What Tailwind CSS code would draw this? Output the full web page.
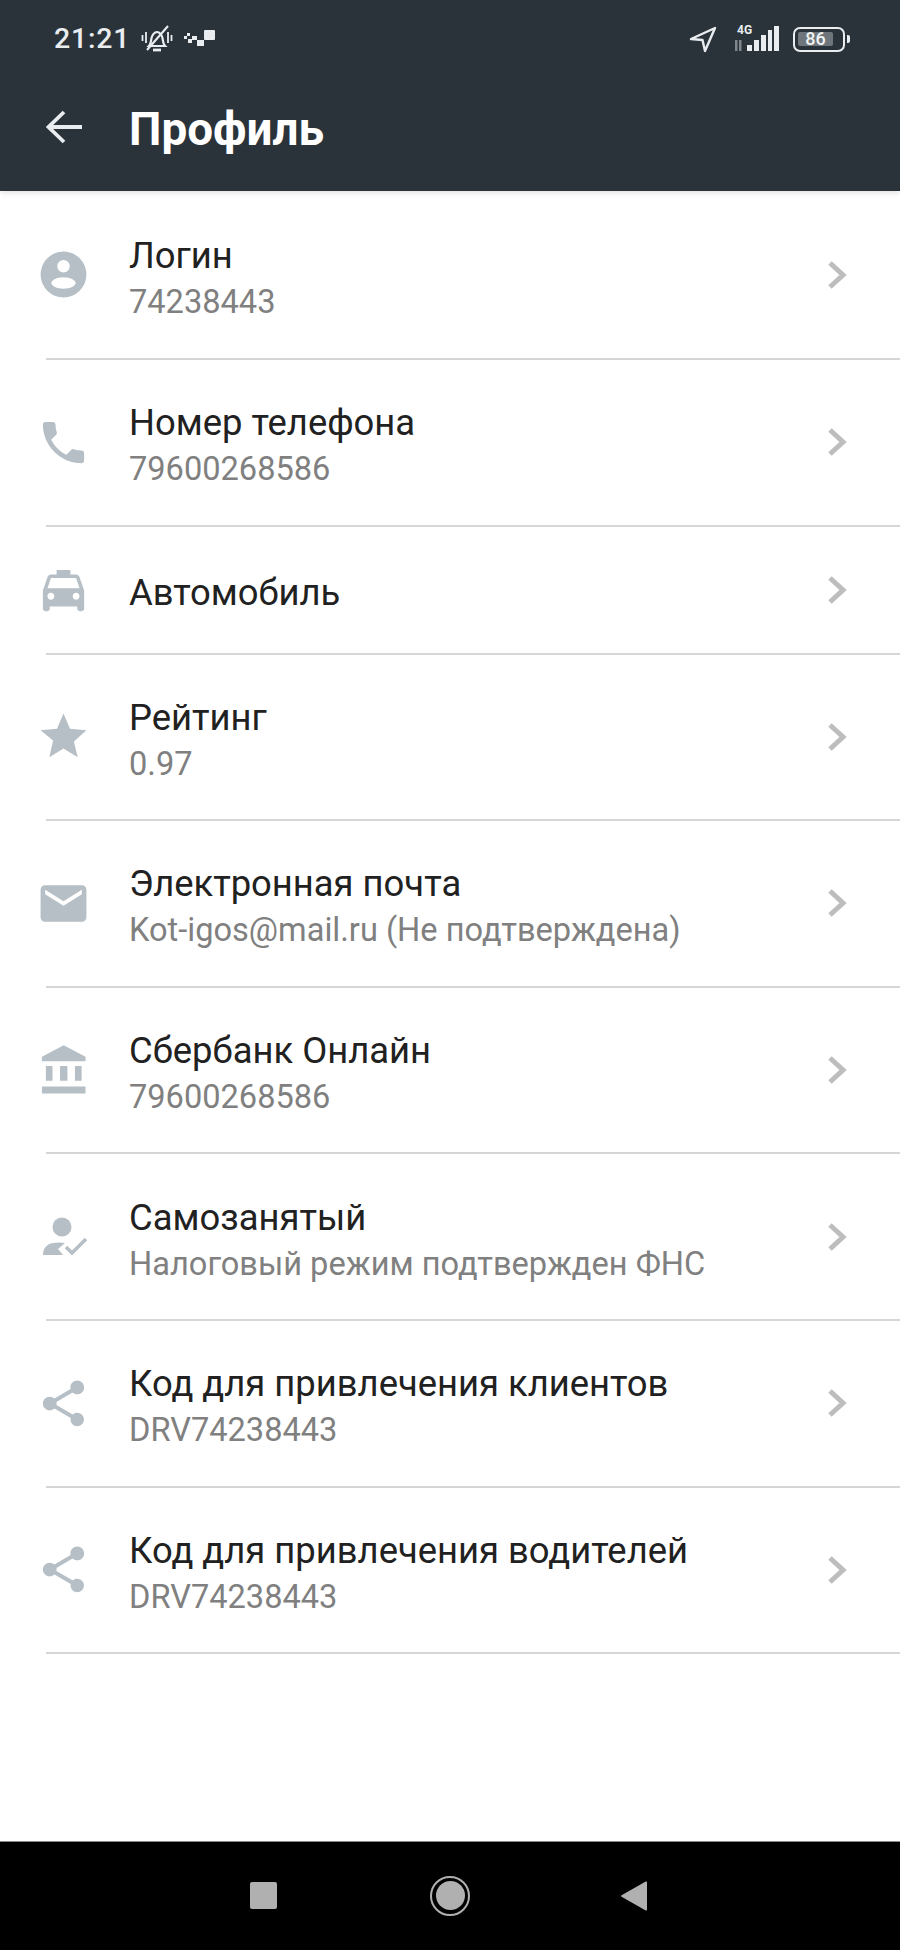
<!DOCTYPE html>
<html lang="ru">
<head>
  <meta charset="UTF-8" />
  <meta name="viewport" content="width=device-width, initial-scale=1.0"/>
  <title>Профиль</title>
  <script src="https://cdn.jsdelivr.net/npm/@tailwindcss/browser@4"></script>
</head>
<body class="bg-white font-['Roboto',sans-serif]">
  <div class="w-[900px] h-[1950px] flex flex-col overflow-hidden">
    <!-- шапка -->
    <header class="h-[191px] shrink-0 bg-[#2b333a] text-white shadow-[0_2px_6px_rgba(0,0,0,0.12)] z-10">
      <div class="h-[78px] flex items-center pl-[54px] pr-[50px]">
        <span class="w-[75px] text-[28.500px] font-medium text-[#e9edf0] tracking-[0.8px]">21:21</span>
        <svg class="ml-[12px] w-[32px] h-[32px]" viewBox="0 0 32 32" fill="none" stroke="#e9edf0" stroke-width="2.200">
          <path d="M8 23c2-2 2-5 2.500-8 .6-3 3-6 5.500-6s5 3 5.500 6c.5 3 .5 6 2.500 8z"/>
          <path d="M12 27h8" stroke-width="2.800"/>
          <path d="M6 27L27 3" stroke-width="2"/>
          <path d="M1.500 12v6M5 9v11M27 9v11M30.500 12v6" stroke-width="1.800"/>
        </svg>
        <svg class="ml-[11px] w-[31px] h-[20px]" viewBox="0 0 31 20" fill="#e9edf0">
          <rect x="0" y="7" width="3" height="3"/>
          <rect x="3" y="4" width="3" height="3"/>
          <rect x="4" y="10" width="4" height="4"/>
          <rect x="8" y="7" width="5" height="4"/>
          <rect x="13" y="11" width="7" height="6"/>
          <rect x="20" y="1" width="11" height="10" rx="1"/>
        </svg>
        <div class="flex-1"></div>
        <svg class="w-[28px] h-[28px]" viewBox="0 0 28 28" fill="none" stroke="#e9edf0" stroke-width="2.400" stroke-linejoin="round">
          <path d="M2 14L26 3 16 26 13.500 15z"/>
        </svg>
        <div class="ml-[16px] relative w-[47px] h-[28px]">
          <span class="absolute left-[4px] top-[-4px] text-[12px] font-bold text-[#e9edf0]">4G</span>
          <svg class="absolute inset-0 w-[47px] h-[28px]" viewBox="0 0 47 28" fill="#e9edf0">
            <path d="M2 15h2.500v11H2zM6 15h2.500v11H6z" opacity="0.45"/>
            <rect x="14" y="20" width="5" height="6"/>
            <rect x="21" y="15" width="5" height="11"/>
            <rect x="28" y="10" width="5" height="16"/>
            <rect x="35" y="5" width="4" height="21"/>
            <rect x="41" y="1" width="5" height="25"/>
          </svg>
        </div>
        <div class="ml-[13px] w-[52px] h-[25px] rounded-[7px] border-[2.500px] border-[#e9edf0] flex items-center px-[3px]">
          <div class="w-[35px] h-[14px] rounded-[2px] bg-[#6f767b] flex items-center justify-center text-[18px] font-medium text-[#f1f3f4] leading-none">86</div>
        </div>
        <div class="ml-[2px] w-[3px] h-[8px] rounded-r-[2px] bg-[#e9edf0]"></div>
      </div>
      <div class="h-[95px] flex items-center pl-[44px]">
        <svg class="w-[40px] h-[40px] mt-[5px]" viewBox="0 0 40 40" fill="none" stroke="#e9edf0" stroke-width="3.800">
          <path d="M38 19H5M20 4L4.500 19 20 34"/>
        </svg>
        <h1 class="ml-[45px] mt-[8px] text-[45.800px] font-bold leading-none">Профиль</h1>
      </div>
    </header>

    <!-- список -->
    <main class="flex-1 flex flex-col">
      <a class="h-[167px] flex items-center">
        <svg class="w-[55px] h-[55px] ml-[36px] shrink-0" viewBox="0 0 24 24" fill="#b5bfc5">
          <path fill-rule="evenodd" d="M12 2a10 10 0 1 0 0 20 10 10 0 0 0 0-20zM12 5.700a2.700 2.700 0 1 1 0 5.400 2.700 2.700 0 0 1 0-5.400zM12 13.200c2.900 0 5.300 1.300 5.300 2.500s-2.400 2.500-5.300 2.500-5.300-1.300-5.300-2.500 2.400-2.500 5.300-2.500z"/>
        </svg>
        <div class="ml-[38px] flex-1 pt-[8px]">
          <div class="text-[36.400px] leading-[46px] text-[#212121]">Логин</div>
          <div class="text-[32.600px] leading-[46px] text-[#808080]">74238443</div>
        </div>
        <svg class="w-[24px] h-[30px] mr-[50px]" viewBox="0 0 24 30" fill="none" stroke="#bdbdbd" stroke-width="5"><path d="M4 3l13 12L4 27"/></svg>
      </a>
      <div class="ml-[46px] h-[2px] bg-[#d6d6d6]"></div>

      <a class="h-[164.600px] flex items-center">
        <svg class="w-[55px] h-[55px] ml-[36px] shrink-0" viewBox="0 0 24 24" fill="#b5bfc5">
          <path d="M6.620 10.790c1.440 2.830 3.760 5.140 6.590 6.590l2.200-2.200c.27-.27.67-.36 1.020-.24 1.120.37 2.330.57 3.570.57.55 0 1 .45 1 1V20c0 .55-.45 1-1 1-9.390 0-17-7.610-17-17 0-.55.45-1 1-1h3.500c.55 0 1 .45 1 1 0 1.250.2 2.450.57 3.570.11.35.03.74-.25 1.020l-2.200 2.200z"/>
        </svg>
        <div class="ml-[38px] flex-1 pt-[8px]">
          <div class="text-[36.400px] leading-[46px] text-[#212121]">Номер телефона</div>
          <div class="text-[32.600px] leading-[46px] text-[#808080]">79600268586</div>
        </div>
        <svg class="w-[24px] h-[30px] mr-[50px]" viewBox="0 0 24 30" fill="none" stroke="#bdbdbd" stroke-width="5"><path d="M4 3l13 12L4 27"/></svg>
      </a>
      <div class="ml-[46px] h-[2px] bg-[#d6d6d6]"></div>

      <a class="h-[126px] flex items-center">
        <svg class="w-[55px] h-[55px] ml-[36px] mt-[2px] shrink-0" viewBox="0 0 24 24" fill="#b5bfc5">
          <path d="M18.920 6.010C18.720 5.420 18.160 5 17.500 5H15V3H9v2H6.500c-.66 0-1.210.42-1.420 1.010L3 12v8c0 .55.45 1 1 1h1c.55 0 1-.45 1-1v-1h12v1c0 .55.45 1 1 1h1c.55 0 1-.45 1-1v-8l-2.080-5.990zM6.500 16c-.83 0-1.500-.67-1.500-1.500S5.670 13 6.500 13s1.500.67 1.500 1.500S7.330 16 6.500 16zm11 0c-.83 0-1.500-.67-1.500-1.500s.67-1.500 1.500-1.500 1.500.67 1.500 1.500-.67 1.500-1.500 1.500zM5 11l1.500-4.500h11L19 11H5z"/>
        </svg>
        <div class="ml-[38px] flex-1 pt-[6px]">
          <div class="text-[36.400px] leading-[46px] text-[#212121]">Автомобиль</div>
        </div>
        <svg class="w-[24px] h-[30px] mr-[50px]" viewBox="0 0 24 30" fill="none" stroke="#bdbdbd" stroke-width="5"><path d="M4 3l13 12L4 27"/></svg>
      </a>
      <div class="ml-[46px] h-[2px] bg-[#d6d6d6]"></div>

      <a class="h-[164.600px] flex items-center">
        <svg class="w-[55px] h-[55px] ml-[36px] shrink-0" viewBox="0 0 24 24" fill="#b5bfc5">
          <path d="M12 17.270L18.180 21l-1.640-6.810L22 9.240l-7.190-.61L12 2 9.190 8.630 2 9.240l5.460 4.550L5.820 21z"/>
        </svg>
        <div class="ml-[38px] flex-1 pt-[8px]">
          <div class="text-[36.400px] leading-[46px] text-[#212121]">Рейтинг</div>
          <div class="text-[32.600px] leading-[46px] text-[#808080]">0.97</div>
        </div>
        <svg class="w-[24px] h-[30px] mr-[50px]" viewBox="0 0 24 30" fill="none" stroke="#bdbdbd" stroke-width="5"><path d="M4 3l13 12L4 27"/></svg>
      </a>
      <div class="ml-[46px] h-[2px] bg-[#d6d6d6]"></div>

      <a class="h-[164.600px] flex items-center">
        <svg class="w-[55px] h-[55px] ml-[36px] shrink-0" viewBox="0 0 24 24" fill="#b5bfc5">
          <path d="M20 4H4c-1.100 0-1.990.9-1.990 2L2 18c0 1.100.9 2 2 2h16c1.100 0 2-.9 2-2V6c0-1.100-.9-2-2-2zm0 4l-8 5-8-5V6l8 5 8-5v2z"/>
        </svg>
        <div class="ml-[38px] flex-1 pt-[8px]">
          <div class="text-[36.400px] leading-[46px] text-[#212121]">Электронная почта</div>
          <div class="text-[32.600px] leading-[46px] text-[#808080]">Kot-igos@mail.ru (Не подтверждена)</div>
        </div>
        <svg class="w-[24px] h-[30px] mr-[50px]" viewBox="0 0 24 30" fill="none" stroke="#bdbdbd" stroke-width="5"><path d="M4 3l13 12L4 27"/></svg>
      </a>
      <div class="ml-[46px] h-[2px] bg-[#d6d6d6]"></div>

      <a class="h-[164.600px] flex items-center">
        <svg class="w-[55px] h-[55px] ml-[36px] shrink-0" viewBox="-0.600 0 24 24" fill="#b5bfc5">
          <path d="M3.700 10v6.500h2.900V10zM9.900 10v6.500h3.200V10zM16.400 10v6.500h2.900V10zM2 22h19v-3H2zM11.500 1L2 6v2h19V6z"/>
        </svg>
        <div class="ml-[38px] flex-1 pt-[8px]">
          <div class="text-[36.400px] leading-[46px] text-[#212121]">Сбербанк Онлайн</div>
          <div class="text-[32.600px] leading-[46px] text-[#808080]">79600268586</div>
        </div>
        <svg class="w-[24px] h-[30px] mr-[50px]" viewBox="0 0 24 30" fill="none" stroke="#bdbdbd" stroke-width="5"><path d="M4 3l13 12L4 27"/></svg>
      </a>
      <div class="ml-[46px] h-[2px] bg-[#d6d6d6]"></div>

      <a class="h-[164.600px] flex items-center">
        <svg class="w-[55px] h-[55px] ml-[36px] shrink-0" viewBox="0 0 55 55" fill="#b5bfc5">
          <circle cx="26" cy="18" r="9.500"/>
          <path d="M7 46c0-7 4-11 10-12 4-.8 8-.8 12 0l-7 6 5 6z"/>
          <path d="M30 38l6 6 14-14" fill="none" stroke="#b5bfc5" stroke-width="3.500"/>
        </svg>
        <div class="ml-[38px] flex-1 pt-[8px]">
          <div class="text-[36.400px] leading-[46px] text-[#212121]">Самозанятый</div>
          <div class="text-[32.600px] leading-[46px] text-[#808080]">Налоговый режим подтвержден ФНС</div>
        </div>
        <svg class="w-[24px] h-[30px] mr-[50px]" viewBox="0 0 24 30" fill="none" stroke="#bdbdbd" stroke-width="5"><path d="M4 3l13 12L4 27"/></svg>
      </a>
      <div class="ml-[46px] h-[2px] bg-[#d6d6d6]"></div>

      <a class="h-[164.600px] flex items-center">
        <svg class="w-[55px] h-[55px] ml-[36px] shrink-0" viewBox="0 0 24 24" fill="#b5bfc5">
          <path d="M18 16.080c-.76 0-1.440.3-1.960.77L8.910 12.700c.05-.23.09-.46.09-.7s-.04-.47-.09-.7l7.050-4.110c.54.5 1.250.81 2.040.81 1.660 0 3-1.340 3-3s-1.340-3-3-3-3 1.340-3 3c0 .24.04.47.09.7L8.040 9.810C7.500 9.310 6.790 9 6 9c-1.660 0-3 1.340-3 3s1.340 3 3 3c.79 0 1.500-.31 2.040-.81l7.120 4.160c-.05.21-.08.43-.08.65 0 1.610 1.310 2.920 2.920 2.920 1.610 0 2.920-1.310 2.920-2.920s-1.310-2.920-2.920-2.920z"/>
        </svg>
        <div class="ml-[38px] flex-1 pt-[8px]">
          <div class="text-[36.400px] leading-[46px] text-[#212121]">Код для привлечения клиентов</div>
          <div class="text-[32.600px] leading-[46px] text-[#808080]">DRV74238443</div>
        </div>
        <svg class="w-[24px] h-[30px] mr-[50px]" viewBox="0 0 24 30" fill="none" stroke="#bdbdbd" stroke-width="5"><path d="M4 3l13 12L4 27"/></svg>
      </a>
      <div class="ml-[46px] h-[2px] bg-[#d6d6d6]"></div>

      <a class="h-[164.600px] flex items-center">
        <svg class="w-[55px] h-[55px] ml-[36px] shrink-0" viewBox="0 0 24 24" fill="#b5bfc5">
          <path d="M18 16.080c-.76 0-1.440.3-1.960.77L8.910 12.700c.05-.23.09-.46.09-.7s-.04-.47-.09-.7l7.050-4.110c.54.5 1.250.81 2.040.81 1.660 0 3-1.340 3-3s-1.340-3-3-3-3 1.340-3 3c0 .24.04.47.09.7L8.040 9.810C7.500 9.310 6.790 9 6 9c-1.660 0-3 1.340-3 3s1.340 3 3 3c.79 0 1.500-.31 2.040-.81l7.120 4.160c-.05.21-.08.43-.08.65 0 1.610 1.310 2.920 2.920 2.920 1.610 0 2.920-1.310 2.920-2.920s-1.310-2.920-2.920-2.920z"/>
        </svg>
        <div class="ml-[38px] flex-1 pt-[8px]">
          <div class="text-[36.400px] leading-[46px] text-[#212121]">Код для привлечения водителей</div>
          <div class="text-[32.600px] leading-[46px] text-[#808080]">DRV74238443</div>
        </div>
        <svg class="w-[24px] h-[30px] mr-[50px]" viewBox="0 0 24 30" fill="none" stroke="#bdbdbd" stroke-width="5"><path d="M4 3l13 12L4 27"/></svg>
      </a>
      <div class="ml-[46px] h-[2px] bg-[#d6d6d6]"></div>
    </main>

    <!-- навигация -->
    <nav class="h-[109px] shrink-0 bg-black border-t border-[#8a8a8a] flex items-center pl-[250px] pb-[1px]">
      <div class="w-[27px] h-[27px] rounded-[2px] bg-[#b0b0b0]"></div>
      <div class="ml-[153px] w-[40px] h-[40px] rounded-full border-[2.500px] border-[#b0b0b0] flex items-center justify-center">
        <div class="w-[29px] h-[29px] rounded-full bg-[#b0b0b0]"></div>
      </div>
      <svg class="ml-[151px] w-[26px] h-[30px]" viewBox="0 0 26 30" fill="#b0b0b0"><path d="M25 .5c.6 0 1 .4 1 1v27c0 .6-.4 1-1 1-.3 0-.5-.1-.7-.2L1 16c-1.300-.6-1.300-1.400 0-2L24.300.7c.2-.1.4-.2.7-.2z"/></svg>
    </nav>
  </div>
</body>
</html>
